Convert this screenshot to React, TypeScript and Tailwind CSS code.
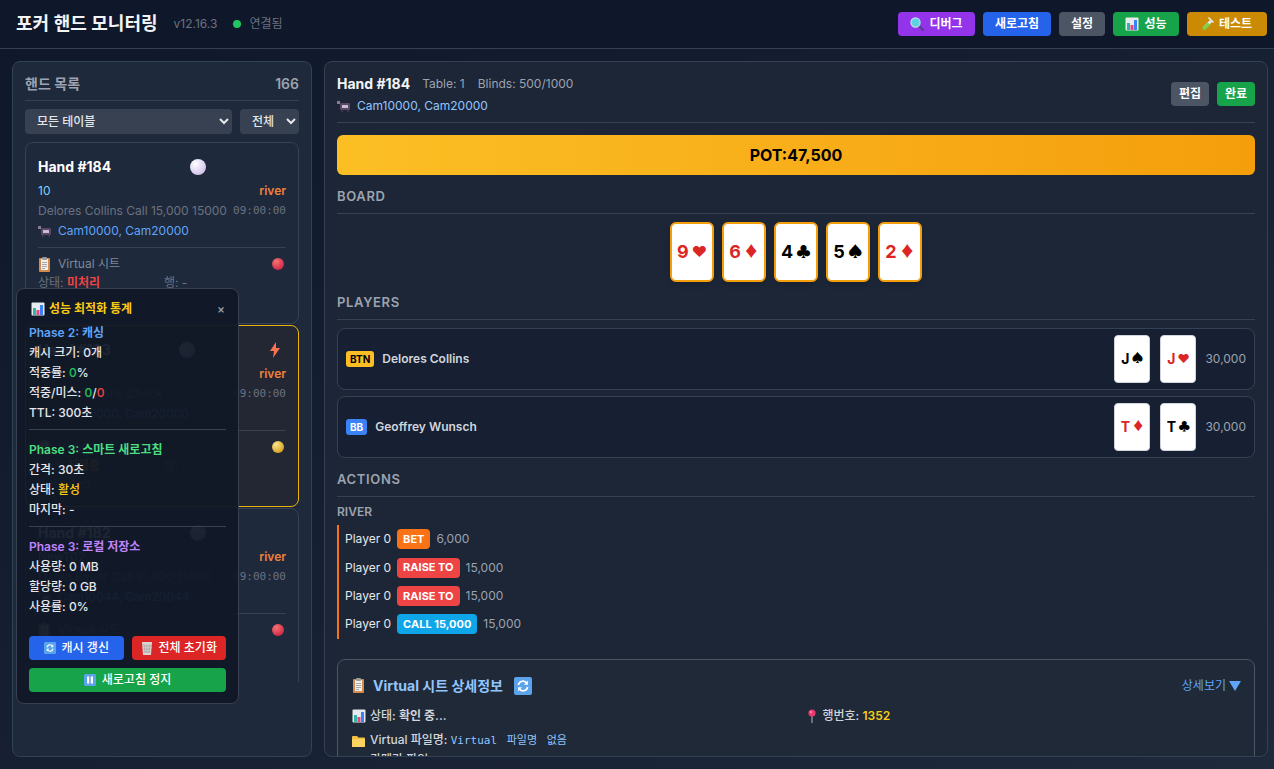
import type { ReactNode } from 'react';

const ff = "font-['Inter','Noto_Sans_CJK_KR',sans-serif]";
const mono = "font-['DejaVu_Sans_Mono','Noto_Sans_CJK_KR',monospace]";
const pearl = 'bg-[radial-gradient(circle_at_35%_30%,#ffffff,#c4aee6)]';
const redOrb = 'bg-[radial-gradient(circle_at_35%_30%,#f87171,#be123c)]';

// small colour icons, drawn to look like the emoji in the screenshot
function CamIcon() {
  return (
    <svg width="14" height="12" viewBox="0 0 14 12" className="shrink-0">
      <rect x="0" y="1" width="3" height="3" fill="#8b7a96" />
      <rect x="3" y="3" width="10" height="7" rx="1" fill="#5b4768" />
      <rect x="5" y="5" width="6" height="3" fill="#c9bcd6" />
      <rect x="4" y="10" width="2" height="2" fill="#3f3350" />
      <rect x="10" y="10" width="2" height="2" fill="#3f3350" />
    </svg>
  );
}

function ClipIcon() {
  return (
    <svg width="13" height="15" viewBox="0 0 13 15" className="shrink-0">
      <rect x="1" y="1" width="11" height="14" rx="1" fill="#d58a4e" />
      <rect x="3" y="2" width="7" height="11" fill="#f1efe9" />
      <rect x="4" y="0" width="5" height="3" rx="1" fill="#9a9a9a" />
      <path d="M4 5.5h5M4 7.5h5M4 9.5h5M4 11.5h3" stroke="#a8a8a8" strokeWidth="1" />
    </svg>
  );
}

function ChartIcon() {
  return (
    <svg width="14" height="14" viewBox="0 0 14 14" className="shrink-0">
      <rect x="0.5" y="0.5" width="13" height="13" rx="1" fill="#e8ebee" />
      <rect x="2" y="6" width="3" height="7" fill="#2db5a5" />
      <rect x="5.5" y="8" width="3" height="5" fill="#e8457f" />
      <rect x="9" y="3" width="3" height="10" fill="#3b82f6" />
    </svg>
  );
}

function SearchIcon() {
  return (
    <svg width="14" height="14" viewBox="0 0 14 14" className="shrink-0">
      <path d="M8.5 8.5 13 13" stroke="#5b3f86" strokeWidth="2.4" strokeLinecap="round" />
      <circle cx="5.5" cy="5.5" r="4.6" fill="#5ed1df" stroke="#b7e6ee" strokeWidth="1.2" />
    </svg>
  );
}

function TubeIcon() {
  return (
    <svg width="14" height="14" viewBox="0 0 14 14" className="shrink-0">
      <path d="M9 1 13 5" stroke="#e6eef2" strokeWidth="1.6" strokeLinecap="round" />
      <path d="M10 3 3 10a1.8 1.8 0 0 0 2 2l7-7z" fill="#dfeef2" />
      <path d="M7.5 5.5 2.6 10.4a1.9 1.9 0 0 0 2.8 2.3l5-5z" fill="#7ed050" />
    </svg>
  );
}

function FolderIcon() {
  return (
    <svg width="13" height="12" viewBox="0 0 13 12" className="shrink-0">
      <path d="M0 2a1 1 0 0 1 1-1h4l1.5 1.5H12a1 1 0 0 1 1 1V11a1 1 0 0 1-1 1H1a1 1 0 0 1-1-1z" fill="#f5bf42" />
      <rect x="0" y="4" width="13" height="8" rx="1" fill="#fcd45f" />
    </svg>
  );
}

function PinIcon() {
  return (
    <svg width="14" height="14" viewBox="0 0 14 14" className="shrink-0">
      <path d="M7 6v8" stroke="#9aa3ad" strokeWidth="1.2" />
      <circle cx="7" cy="4" r="3.6" fill="#ec3a6f" />
      <circle cx="6" cy="3" r="1" fill="#f7a3bd" />
    </svg>
  );
}

function TileRefresh({ size = 14 }: { size?: number }) {
  return (
    <svg width={size} height={size} viewBox="0 0 14 14" className="shrink-0">
      <rect width="14" height="14" rx="1.5" fill="#5ba4ec" />
      <path d="M3.4 6.2A3.6 3.6 0 0 1 10 5M10.6 7.8A3.6 3.6 0 0 1 4 9" fill="none" stroke="#fff" strokeWidth="1.3" />
      <path d="M10.8 2.8V6H7.8zM3.2 11.2V8h3z" fill="#fff" />
    </svg>
  );
}

function TrashIcon() {
  return (
    <svg width="12" height="14" viewBox="0 0 12 14" className="shrink-0">
      <path d="M1 1h10l-1 13H2z" fill="#d9d5d3" />
      <path d="M3 3l1 9M6 3v9M9 3l-1 9M2 5h8M2.3 8h7.4M2.5 11h7" stroke="#a9a29f" strokeWidth="0.7" />
    </svg>
  );
}

function PauseTile() {
  return (
    <svg width="12" height="12" viewBox="0 0 12 12" className="shrink-0">
      <rect width="12" height="12" rx="1.5" fill="#5ba4ec" />
      <rect x="3" y="2.5" width="2.2" height="7" fill="#fff" />
      <rect x="6.8" y="2.5" width="2.2" height="7" fill="#fff" />
    </svg>
  );
}

type HandCardProps = {
  title: string;
  table: string;
  orb: string;
  action: string;
  cams: string;
  status: string;
  statusColor: string;
  active?: boolean;
  extra?: string;
};

function HandCard({ title, table, orb, action, cams, status, statusColor, active, extra }: HandCardProps) {
  return (
    <div
      className={`shrink-0 rounded-lg border px-[12px] pt-[12px] h-[182px] ${
        active ? 'border-[#eab308] bg-[#222733]' : 'border-[#374151] bg-[#1e293b]'
      }`}
    >
      <div className="flex items-center h-[24px]">
        <span className={`text-sm font-bold text-white ${active ? 'w-[141px]' : 'w-[152px]'}`}>{title}</span>
        <span className={`inline-block rounded-full w-4 h-4 ${pearl}`} />
        {active && (
          <svg className="ml-auto mr-[6px]" width="10" height="16" viewBox="0 0 10 16">
            <path d="M6 0 L0 9 H4 L3 16 L10 6 H6 Z" fill="#f97352" />
          </svg>
        )}
      </div>
      <div className="flex justify-between mt-[2px] text-xs h-[20px] items-center">
        <span className="text-[#7dd3fc]">{table}</span>
        <span className="font-semibold text-[#f0803c]">river</span>
      </div>
      <div className="flex justify-between text-xs h-[20px] items-center text-[#6b7280]">
        <span>{action}</span>
        <span className={`${mono} text-[11px]`}>09:00:00</span>
      </div>
      <div className="flex items-center gap-[6px] text-xs h-[20px] text-[#60a5fa]">
        <CamIcon />
        <span>{cams}</span>
      </div>
      <div className="mt-[6px] border-t border-[#374151] pt-[7px]">
        <div className="flex items-center justify-between text-xs h-[18px] text-[#7f8896] pr-[2px]">
          <span className="flex items-center gap-[7px]">
            <ClipIcon /> Virtual 시트
          </span>
          <span className={`inline-block rounded-full w-3 h-3 ${orb}`} />
        </div>
        <div className="flex text-xs h-[20px] items-center text-[#6b7280]">
          <span className="w-[126px]">
            상태: <span className={`font-semibold ${statusColor}`}>{status}</span>
          </span>
          <span>행: -</span>
        </div>
        {extra && <div className="text-xs text-[#6b7280]">{extra}</div>}
      </div>
    </div>
  );
}

function HeadButton({ className, children }: { className: string; children: ReactNode }) {
  return (
    <button className={`h-[24px] rounded text-xs font-semibold text-white flex items-center justify-center gap-[5px] ${className}`}>
      {children}
    </button>
  );
}

function BoardCard({ rank, suit, red }: { rank: string; suit: string; red?: boolean }) {
  return (
    <div
      className={`w-[44px] h-[60px] bg-white rounded-md border-2 border-[#f59e0b] flex items-center justify-center gap-[3px] font-bold shadow-md ${
        red ? 'text-[#dc2626]' : 'text-black'
      }`}
    >
      <span className="text-lg">{rank}</span>
      <span className="text-[15px]">{suit}</span>
    </div>
  );
}

function SmallCard({ rank, suit, red }: { rank: string; suit: string; red?: boolean }) {
  return (
    <div
      className={`w-[36px] h-[48px] bg-white rounded border border-[#d1d5db] flex items-center justify-center gap-[2px] font-bold ${
        red ? 'text-[#dc2626]' : 'text-black'
      }`}
    >
      <span className="text-sm">{rank}</span>
      <span className="text-[12px]">{suit}</span>
    </div>
  );
}

function PlayerRow({ badge, badgeClass, name, cards }: { badge: string; badgeClass: string; name: string; cards: ReactNode }) {
  return (
    <div className="flex items-center h-[62px] rounded-lg border border-[#334155] bg-[#172033] pl-[8px] pr-[8px]">
      <span className={`h-[16px] px-[4px] rounded-[3px] text-[10px] font-bold flex items-center ${badgeClass}`}>{badge}</span>
      <span className="ml-[8px] text-xs font-semibold text-[#d1d5db]">{name}</span>
      <div className="ml-auto flex items-center gap-[10px]">{cards}</div>
      <span className="ml-[9px] text-xs text-[#9ca3af]">30,000</span>
    </div>
  );
}

function ActionRow({ label, color, amount }: { label: string; color: string; amount: string }) {
  return (
    <div className="flex items-center h-[28.4px] text-xs">
      <span className="text-[#e5e7eb] mr-[6px]">Player 0</span>
      <span className={`h-[20px] px-[6px] rounded text-[11px] font-bold text-white flex items-center ${color}`}>{label}</span>
      <span className="ml-[6px] text-[#9ca3af]">{amount}</span>
    </div>
  );
}

function SectionTitle({ children }: { children: ReactNode }) {
  return (
    <div className="text-[13px] font-semibold tracking-[0.05em] text-[#9ca3af] border-b border-[#374151] h-[32px] flex items-center pb-[2px]">
      {children}
    </div>
  );
}

export default function App() {
  return (
    <div className={`h-screen overflow-hidden flex flex-col bg-gradient-to-br from-[#0f172a] to-[#1e293b] ${ff}`}>
      <header className="h-[49px] shrink-0 flex items-center justify-between border-b border-[#334155] bg-[#0f172a] pl-[16px] pr-[7px]">
        <div className="flex items-center">
          <h1 className="text-lg font-semibold text-[#f3f4f6]">포커 핸드 모니터링</h1>
          <span className="ml-[16px] text-xs text-[#6b7280]">v12.16.3</span>
          <span className="ml-[16px] w-[8px] h-[8px] rounded-full bg-[#22c55e]" />
          <span className="ml-[8px] text-xs text-[#6b7280]">연결됨</span>
        </div>
        <div className="flex items-center gap-[8px]">
          <HeadButton className="bg-[#9333ea] w-[77px]"><SearchIcon /> 디버그</HeadButton>
          <HeadButton className="bg-[#2563eb] w-[68px]">새로고침</HeadButton>
          <HeadButton className="bg-[#4b5563] w-[46px]">설정</HeadButton>
          <HeadButton className="bg-[#16a34a] w-[66px]"><ChartIcon /> 성능</HeadButton>
          <HeadButton className="bg-[#ca8a04] w-[80px] pr-[2px]"><TubeIcon /> 테스트</HeadButton>
        </div>
      </header>

      <main className="flex-1 min-h-0 flex gap-[12px] pl-[12px] pr-[6px] pt-[12px] pb-[12px]">
        {/* left list */}
        <aside className="w-[300px] shrink-0 rounded-lg border border-[#334155] bg-[#1e293b] px-[12px] pt-[12px]">
          <div className="flex justify-between items-center h-[27px] border-b border-[#374151] pb-[7px] text-sm font-semibold text-[#9ca3af]">
            <span>핸드 목록</span>
            <span>166</span>
          </div>
          <div className="flex gap-[8px] mt-[8px]">
            <select className="h-[25px] w-[207px] rounded bg-[#374151] px-[8px] text-xs font-medium text-[#e5e7eb]">
              <option>모든 테이블</option>
            </select>
            <select className="h-[25px] flex-1 min-w-0 rounded bg-[#374151] px-[8px] text-xs font-medium text-[#e5e7eb]">
              <option>전체</option>
            </select>
          </div>
          <div className="mt-[8px] h-[540px] overflow-hidden flex flex-col gap-[1px]">
            <HandCard title="Hand #184" table="10" orb={redOrb} action="Delores Collins Call 15,000 15000" cams="Cam10000, Cam20000" status="미처리" statusColor="text-[#ef4444]" />
            <HandCard active title="Hand #183" table="10" orb="bg-[radial-gradient(circle_at_35%_30%,#fde68a,#ca8a04)]" action="Delores Collins Check" cams="Cam10000, Cam20000" status="진행중" statusColor="text-[#eab308]" extra="executed" />
            <HandCard title="Hand #182" table="NewT02" orb={redOrb} action="Dante Bauer Call 15,000 15000" cams="Cam10044, Cam20044" status="미처리" statusColor="text-[#ef4444]" />
          </div>
        </aside>

        {/* hand detail */}
        <section className="flex-1 min-w-0 rounded-lg border border-[#334155] bg-[#1c2637] px-[12px] pt-[12px] overflow-hidden">
          <div className="flex justify-between border-b border-[#374151] h-[49px]">
            <div>
              <div className="flex items-center h-[20px]">
                <span className="text-sm font-bold text-[#f3f4f6]">Hand #184</span>
                <span className="ml-[12px] text-xs text-[#9ca3af]">Table: 1</span>
                <span className="ml-[13px] text-xs text-[#9ca3af]">Blinds: 500/1000</span>
              </div>
              <div className="flex items-center gap-[6px] text-xs text-[#93c5fd] h-[23px]">
                <CamIcon /> Cam10000, Cam20000
              </div>
            </div>
            <div className="flex gap-[8px] pt-[8px] h-[32px] box-content">
              <button className="h-[24px] w-[38px] rounded bg-[#4b5563] text-xs font-semibold text-white">편집</button>
              <button className="h-[24px] w-[38px] rounded bg-[#16a34a] text-xs font-semibold text-white">완료</button>
            </div>
          </div>

          <div className="mt-[12px] h-[40px] rounded-md bg-gradient-to-r from-[#fbbf24] to-[#f59e0b] flex items-center justify-center text-base font-bold text-black">
            POT:47,500
          </div>

          <div className="mt-[7px]">
            <SectionTitle>BOARD</SectionTitle>
          </div>
          <div className="flex justify-center gap-[8px] mt-[8px]">
            <BoardCard rank="9" suit="♥" red />
            <BoardCard rank="6" suit="♦" red />
            <BoardCard rank="4" suit="♣" />
            <BoardCard rank="5" suit="♠" />
            <BoardCard rank="2" suit="♦" red />
          </div>

          <div className="mt-[6px]">
            <SectionTitle>PLAYERS</SectionTitle>
          </div>
          <div className="flex flex-col gap-[6px] mt-[8px]">
            <PlayerRow
              badge="BTN"
              badgeClass="bg-[#fbbf24] text-black"
              name="Delores Collins"
              cards={
                <>
                  <SmallCard rank="J" suit="♠" />
                  <SmallCard rank="J" suit="♥" red />
                </>
              }
            />
            <PlayerRow
              badge="BB"
              badgeClass="bg-[#3b82f6] text-white"
              name="Geoffrey Wunsch"
              cards={
                <>
                  <SmallCard rank="T" suit="♦" red />
                  <SmallCard rank="T" suit="♣" />
                </>
              }
            />
          </div>

          <div className="mt-[7px]">
            <SectionTitle>ACTIONS</SectionTitle>
          </div>
          <div className="mt-[7px] text-xs font-semibold text-[#9ca3af]">RIVER</div>
          <div className="mt-[5px] border-l-2 border-[#f97316] pl-[6px]">
            <ActionRow label="BET" color="bg-[#f97316]" amount="6,000" />
            <ActionRow label="RAISE TO" color="bg-[#ef4444]" amount="15,000" />
            <ActionRow label="RAISE TO" color="bg-[#ef4444]" amount="15,000" />
            <ActionRow label="CALL 15,000" color="bg-[#0ea5e9]" amount="15,000" />
          </div>

          <div className="mt-[20px] rounded-lg border border-[#4b5563] bg-[#1f2937] pl-[14px] pr-[13px] pt-[14px] pb-[40px]">
            <div className="flex justify-between items-center h-[24px]">
              <div className="flex items-center">
                <ClipIcon />
                <span className="ml-[8px] text-sm font-bold text-[#93c5fd]">Virtual 시트 상세정보</span>
                <span className="ml-[11px]"><TileRefresh size={18} /></span>
              </div>
              <span className="text-xs text-[#60a5fa] flex items-center gap-[3px]">
                상세보기
                <svg width="12" height="10" viewBox="0 0 12 10">
                  <path d="M0 0h12L6 10z" fill="#60a5fa" />
                </svg>
              </span>
            </div>
            <div className="grid grid-cols-2 gap-x-[16px] mt-[8px] text-xs font-medium text-[#d1d5db]">
              <div className="h-[20px] flex items-center gap-[4px]">
                <ChartIcon />
                <span>상태: <span className="font-semibold">확인 중...</span></span>
              </div>
              <div className="h-[20px] flex items-center gap-[4px]">
                <PinIcon />
                <span>행번호: <span className="font-semibold text-[#facc15]">1352</span></span>
              </div>
            </div>
            <div className="h-[24px] mt-[3px] flex items-center gap-[5px] text-xs font-medium text-[#d1d5db]">
              <FolderIcon />
              <span>Virtual 파일명: <span className={`${mono} text-[11px] font-normal text-[#93c5fd] [word-spacing:3px]`}>Virtual 파일명 없음</span></span>
            </div>
            <div className="h-[16px] flex items-center gap-[5px] text-xs font-medium text-[#d1d5db]">
              <span className="w-[13px]" />
              <span>카메라 파일: <span className={`${mono} text-[11px] font-normal text-[#4ade80]`}>Cam10000, Cam20000</span></span>
            </div>
          </div>
        </section>
      </main>

      {/* perf overlay */}
      <div className="absolute left-[16px] top-[288px] w-[223px] h-[416px] rounded-lg border border-[#374151] bg-[#111827]/95 px-[12px] pt-[10px] text-xs font-medium text-[#e5e7eb]">
        <div className="flex items-center justify-between h-[20px] pl-[2px]">
          <span className="flex items-center gap-[4px] font-bold text-[#facc15]"><ChartIcon /> 성능 최적화 통계</span>
          <span className="text-[#9ca3af] mr-[1px]">×</span>
        </div>
        <div className="mt-[4px] leading-[20px]">
          <div className="font-semibold text-[#60a5fa]">Phase 2: 캐싱</div>
          <div>캐시 크기: 0개</div>
          <div>적중률: <span className="text-[#22c55e]">0</span>%</div>
          <div>적중/미스: <span className="text-[#22c55e]">0</span>/<span className="text-[#ef4444]">0</span></div>
          <div>TTL: 300초</div>
          <div className="border-t border-[#374151] mt-[6px] mb-[10px]" />
          <div className="font-semibold text-[#4ade80]">Phase 3: 스마트 새로고침</div>
          <div>간격: 30초</div>
          <div>상태: <span className="text-[#facc15]">활성</span></div>
          <div>마지막: -</div>
          <div className="border-t border-[#374151] mt-[6px] mb-[10px]" />
          <div className="font-semibold text-[#c084fc]">Phase 3: 로컬 저장소</div>
          <div>사용량: 0 MB</div>
          <div>할당량: 0 GB</div>
          <div>사용률: 0%</div>
        </div>
        <div className="flex gap-[8px] mt-[19px]">
          <button className="flex-1 h-[24px] rounded bg-[#2563eb] text-xs font-medium text-white flex items-center justify-center gap-[6px]"><TileRefresh size={12} /> 캐시 갱신</button>
          <button className="flex-1 h-[24px] rounded bg-[#dc2626] text-xs font-medium text-white flex items-center justify-center gap-[6px]"><TrashIcon /> 전체 초기화</button>
        </div>
        <button className="mt-[8px] w-full h-[24px] rounded bg-[#16a34a] text-xs font-medium text-white flex items-center justify-center gap-[6px]"><PauseTile /> 새로고침 정지</button>
      </div>
    </div>
  );
}
